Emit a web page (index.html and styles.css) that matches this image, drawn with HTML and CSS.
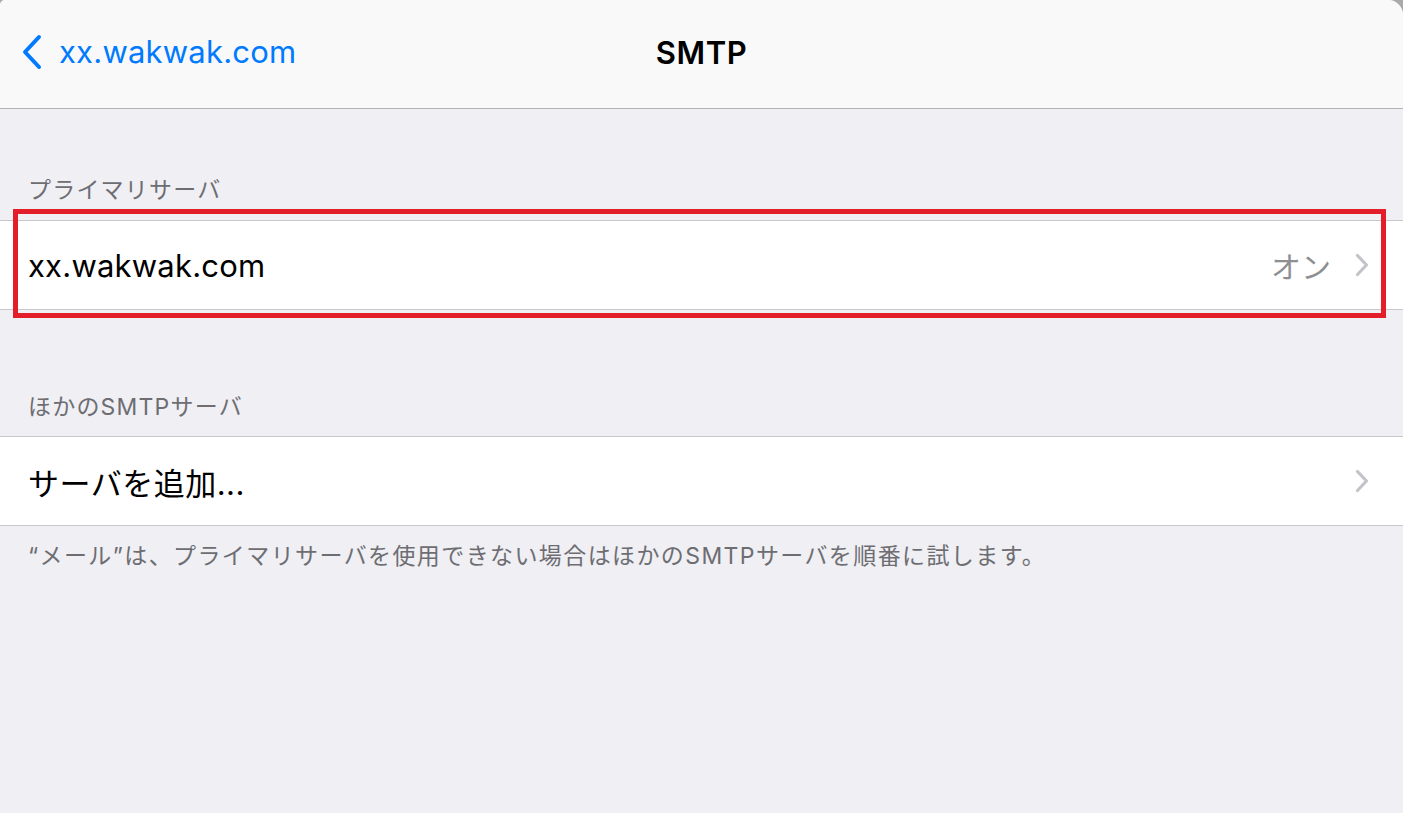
FILE: index.html
```html
<!DOCTYPE html>
<html lang="ja">
<head>
<meta charset="utf-8">
<title>SMTP</title>
<link rel="stylesheet" href="styles.css">
</head>
<body>
<div class="screen">
  <header class="nav">
    <a class="back">
      <svg class="back-icon" width="24" height="36" viewBox="0 0 24 36"><path d="M19 3 L5 18 L19 33" fill="none" stroke="#007aff" stroke-width="4" stroke-linecap="round" stroke-linejoin="round"/></svg>
      <span>xx.wakwak.com</span>
    </a>
    <h1 class="title">SMTP</h1>
    <div class="spacer"></div>
  </header>

  <main class="content">
    <div class="section-header first">プライマリサーバ</div>
    <div class="group highlighted">
      <div class="row">
        <span class="label">xx.wakwak.com</span>
        <span class="value">オン</span>
        <svg class="chevron" width="14" height="24" viewBox="0 0 14 24"><path d="M2.5 2.5 L11.5 12 L2.5 21.5" fill="none" stroke="#c4c4c8" stroke-width="3.2" stroke-linecap="round" stroke-linejoin="round"/></svg>
      </div>
      <div class="highlight-box"></div>
    </div>

    <div class="section-header second">ほかのSMTPサーバ</div>
    <div class="group">
      <div class="row">
        <span class="label jp">サーバを追加...</span>
        <svg class="chevron" width="14" height="24" viewBox="0 0 14 24"><path d="M2.5 2.5 L11.5 12 L2.5 21.5" fill="none" stroke="#c4c4c8" stroke-width="3.2" stroke-linecap="round" stroke-linejoin="round"/></svg>
      </div>
    </div>
    <p class="footer">“メール”は、プライマリサーバを使用できない場合はほかのSMTPサーバを順番に試します。</p>
  </main>
</div>
</body>
</html>
```

FILE: styles.css
```css
* { box-sizing: border-box; }
html, body { margin: 0; padding: 0; }
body {
  width: 1403px;
  height: 813px;
  background: #a9a9a9;
  overflow: hidden;
  font-family: Inter, "Noto Sans CJK JP", sans-serif;
}
.screen {
  width: 1403px;
  height: 813px;
  background: #efeff4;
  border-radius: 5px 15px 0 0;
  overflow: hidden;
  display: flex;
  flex-direction: column;
}
.nav {
  height: 109px;
  background: #f9f9f9;
  border-bottom: 1px solid #b4b4b8;
  display: grid;
  grid-template-columns: 1fr auto 1fr;
  align-items: start;
  padding-top: 33px;
}
.back {
  display: flex;
  align-items: center;
  gap: 15px;
  padding-left: 20px;
  color: #007aff;
  font-size: 31px;
  line-height: 38px;
  letter-spacing: 0.2px;
}
.back-icon { display: block; }
.title {
  margin: 0;
  font-size: 31px;
  line-height: 40px;
  font-weight: 600;
  color: #000;
  letter-spacing: 0.6px;
}
.content {
  display: flex;
  flex-direction: column;
}
.section-header {
  display: flex;
  align-items: flex-end;
  padding-left: 28px;
  color: #6d6d72;
  font-size: 23px;
  line-height: 26px;
  letter-spacing: 1.2px;
}
.section-header.first { height: 111px; padding-bottom: 17px; }
.section-header.second { height: 126px; padding-bottom: 16px; }
.group {
  position: relative;
  background: #fff;
  border-top: 1px solid #c8c7cc;
  border-bottom: 1px solid #c8c7cc;
}
.row {
  height: 88px;
  display: flex;
  align-items: center;
  padding: 0 34px 0 28px;
  font-size: 31px;
  color: #000;
}
.label { flex: 1; letter-spacing: 0.2px; }
.label.jp { letter-spacing: 0.5px; }
.value {
  color: #8e8e93;
  margin-right: 24px;
  font-size: 30px;
}
.chevron { display: block; }
.highlight-box {
  position: absolute;
  left: 13px;
  top: -12px;
  width: 1373px;
  height: 109px;
  border: 5px solid #e31e2a;
  pointer-events: none;
}
.footer {
  margin: 0;
  padding: 17px 0 0 28px;
  color: #6d6d72;
  font-size: 23px;
  line-height: 26px;
  letter-spacing: 1.4px;
}
```
